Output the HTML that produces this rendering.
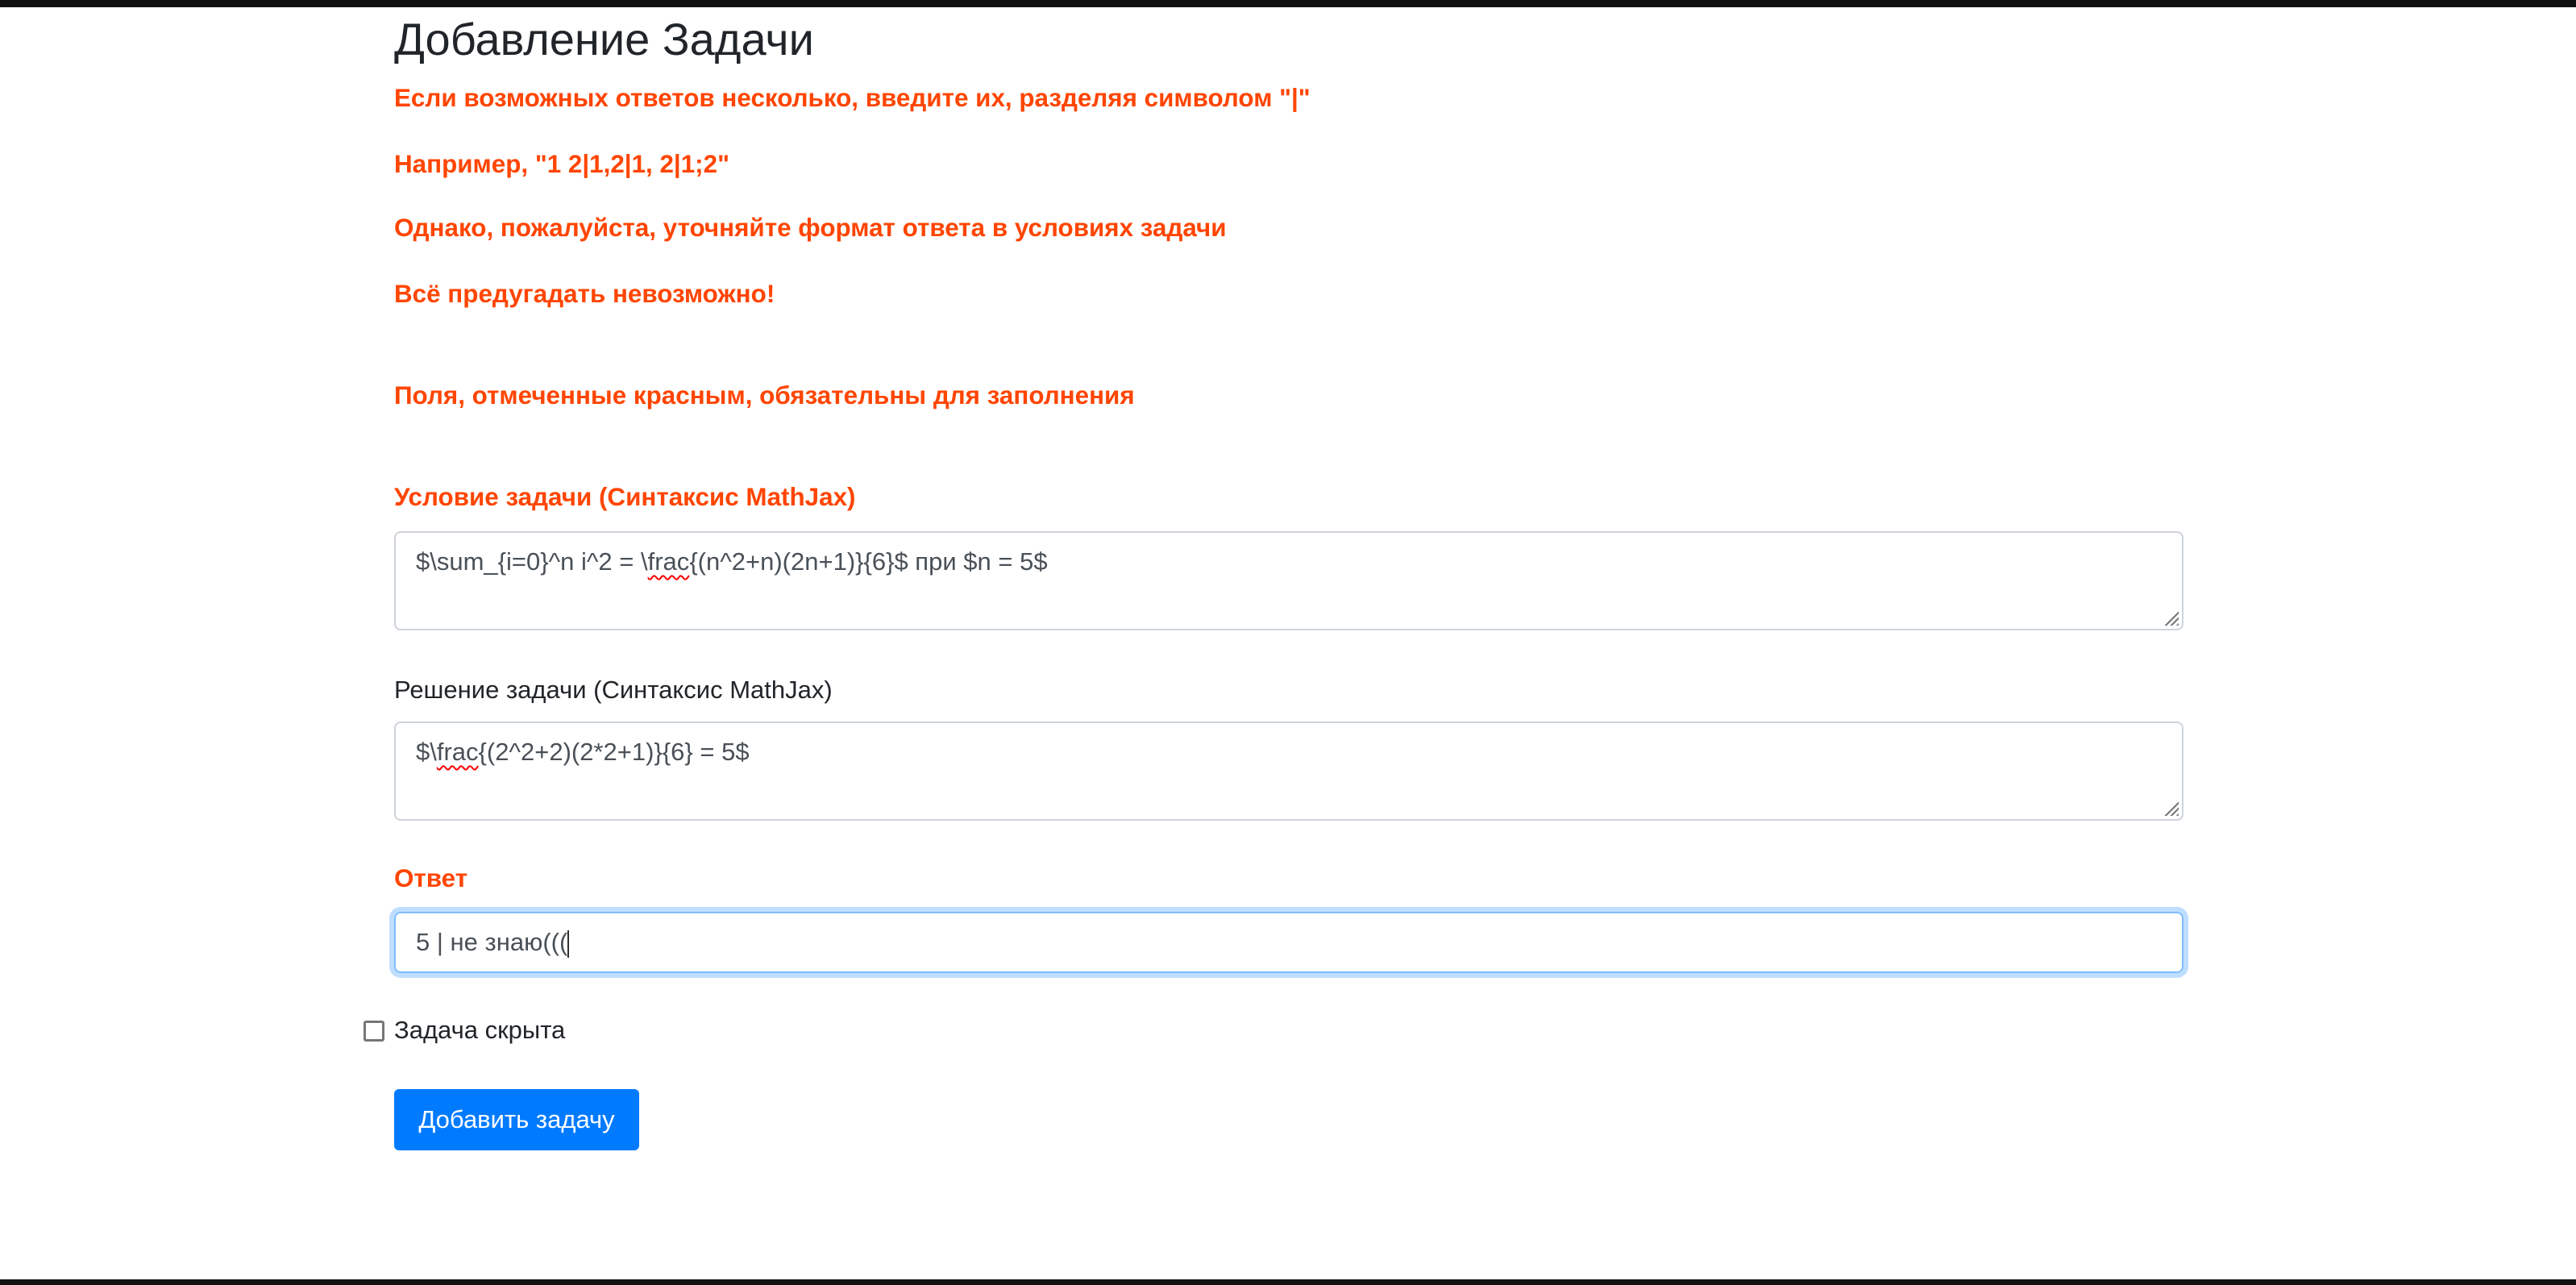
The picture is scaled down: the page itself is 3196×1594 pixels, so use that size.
<!DOCTYPE html>
<html><head><meta charset="utf-8"><style>
html,body{margin:0;padding:0;width:3196px;height:1594px;background:#fff;overflow:hidden;font-family:"Liberation Sans",Arial,sans-serif}
.bar{position:absolute;left:0;width:3196px;background:#111}
.t{position:absolute;left:489px;white-space:nowrap;line-height:40px;font-size:31px}
.r{color:#ff4500;font-weight:bold;font-size:31.4px}
.box{position:absolute;left:489px;width:2220px;border:2px solid #ced4da;border-radius:8px;box-sizing:border-box;background:#fff}
.in{position:absolute;left:25px;font-size:31px;color:#495057;line-height:40px;white-space:nowrap}
.grip{position:absolute;right:4px;bottom:4px;width:18px;height:18px;background:repeating-linear-gradient(135deg,transparent 0 3px,#777 3px 5px);clip-path:polygon(100% 0,100% 100%,0 100%)}
.sq{text-decoration:underline wavy red;text-decoration-thickness:2px;text-underline-offset:6px}
</style></head><body>
<div class="bar" style="top:0;height:9px"></div>
<div class="bar" style="top:1587px;height:7px"></div>

<div class="t" style="top:17px;font-size:56px;line-height:64px;color:#212529">Добавление Задачи</div>
<div class="t r" style="top:102px">Если возможных ответов несколько, введите их, разделяя символом "|"</div>
<div class="t r" style="top:184px">Например, "1 2|1,2|1, 2|1;2"</div>
<div class="t r" style="top:263px">Однако, пожалуйста, уточняйте формат ответа в условиях задачи</div>
<div class="t r" style="top:345px">Всё предугадать невозможно!</div>
<div class="t r" style="top:471px">Поля, отмеченные красным, обязательны для заполнения</div>
<div class="t r" style="top:597px">Условие задачи (Синтаксис MathJax)</div>

<div class="box" style="top:659px;height:123px"><div class="in" style="top:16px">$\sum_{i=0}^n i^2 = \<span class="sq">frac</span>{(n^2+n)(2n+1)}{6}$ при $n = 5$</div><div class="grip"></div></div>

<div class="t" style="top:836px;color:#212529">Решение задачи (Синтаксис MathJax)</div>
<div class="box" style="top:895px;height:123px"><div class="in" style="top:16px">$\<span class="sq">frac</span>{(2^2+2)(2*2+1)}{6} = 5$</div><div class="grip"></div></div>

<div class="t r" style="top:1070px">Ответ</div>
<div class="box" style="top:1131px;height:76px;border-color:#80bdff;box-shadow:0 0 0 6px rgba(0,123,255,.25)"><div class="in" style="top:16px">5 | не знаю(((<span style="display:inline-block;width:2px;height:34px;background:#333;vertical-align:middle"></span></div></div>

<div style="position:absolute;left:451px;top:1266px;width:20px;height:20px;border:3px solid #767676;border-radius:3px;background:#fff"></div>
<div class="t" style="top:1258px;color:#212529">Задача скрыта</div>

<div style="position:absolute;left:489px;top:1351px;width:304px;height:76px;background:#007bff;border-radius:6px;color:#fff;font-size:31px;line-height:76px;text-align:center">Добавить задачу</div>
</body></html>
